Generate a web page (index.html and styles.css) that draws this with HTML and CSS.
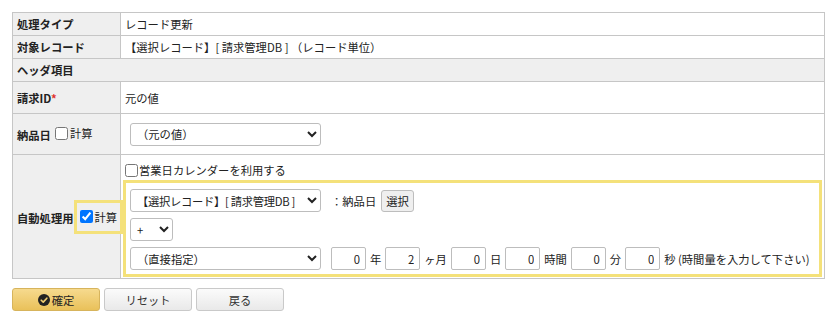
FILE: index.html
```html
<!DOCTYPE html>
<html lang="ja">
<head>
<meta charset="utf-8">
<link rel="stylesheet" href="styles.css">
</head>
<body>
<table class="form">
  <colgroup><col class="c-label"><col></colgroup>
  <tr class="r-std"><th>処理タイプ</th><td>レコード更新</td></tr>
  <tr class="r-std"><th>対象レコード</th><td>【選択レコード】[&nbsp;請求管理DB&nbsp;]&nbsp;（レコード単位）</td></tr>
  <tr class="r-std"><th colspan="2" class="section">ヘッダ項目</th></tr>
  <tr class="r-id"><th>請求ID<span class="req">*</span></th><td>元の値</td></tr>
  <tr class="r-date">
    <th><span class="lbl">納品日</span><label class="chk"><input type="checkbox">計算</label></th>
    <td class="pad-sel"><select class="sel-wide"><option>（元の値）</option></select></td>
  </tr>
  <tr class="r-auto">
    <th><span class="lbl">自動処理用</span><label class="chk hl"><input type="checkbox" checked>計算</label></th>
    <td class="auto-cell">
      <label class="chk cal"><input type="checkbox">営業日カレンダーを利用する</label>
      <div class="calc-box">
        <div class="line">
          <select class="sel-wide sel-rec"><option>【選択レコード】[ 請求管理DB ]</option></select>
          <span class="field-name">：納品日</span>
          <button class="btn-small" type="button">選択</button>
        </div>
        <div class="line">
          <select class="sel-op"><option>+</option></select>
        </div>
        <div class="line">
          <select class="sel-wide sel-gap"><option>（直接指定）</option></select>
          <input class="num" type="text" value="0"><span>年</span>
          <input class="num" type="text" value="2"><span>ヶ月</span>
          <input class="num" type="text" value="0"><span>日</span>
          <input class="num" type="text" value="0"><span>時間</span>
          <input class="num" type="text" value="0"><span>分</span>
          <input class="num" type="text" value="0"><span>秒 (時間量を入力して下さい)</span>
        </div>
      </div>
    </td>
  </tr>
</table>
<div class="actions">
  <button class="btn btn-primary" type="button"><svg class="ico" viewBox="0 0 16 16" width="12" height="12"><circle cx="8" cy="8" r="8" fill="#222"/><path d="M4.3 8.3 L7 10.9 L11.8 5.6" fill="none" stroke="#f0cd70" stroke-width="2.2" stroke-linecap="round" stroke-linejoin="round"/></svg>確定</button>
  <button class="btn" type="button">リセット</button>
  <button class="btn" type="button">戻る</button>
</div>
</body>
</html>
```

FILE: styles.css
```css
html, body {
  margin: 0;
  background: #fff;
}
body {
  padding: 12px;
  font-family: "Noto Sans CJK JP", "Noto Sans", sans-serif;
  font-size: 11.3px;
  color: #222;
}
.form {
  border-collapse: collapse;
  table-layout: fixed;
  width: 813px;
}
.c-label { width: 108px; }
.form th, .form td {
  border: 1px solid #c6c6c6;
  padding: 0 4px;
  text-align: left;
  vertical-align: middle;
  line-height: 16px;
}
.form th {
  background: #efefef;
  font-weight: bold;
  white-space: nowrap;
}
.form td { background: #fff; }
.form th.section { background: #efefef; }
.r-std th, .r-std td { height: 22px; }
.r-id th, .r-id td { height: 31px; }
.r-date th, .r-date td { height: 40px; }
.req { color: #e0342c; font-weight: bold; }
.lbl { margin-right: 2px; }
.chk {
  display: inline-flex;
  align-items: center;
  font-weight: normal;
  white-space: nowrap;
}
.chk input {
  width: 13px;
  height: 13px;
  margin: 0 2px 0 2px;
}
.hl {
  border: 3px solid #f4e17a;
  padding: 6px 3px 6px 1px;
  margin-left: -2px;
  margin-right: -4px;
}
.pad-sel { padding-left: 9px !important; }
select {
  font-family: inherit;
  font-size: 11.3px;
  color: #222;
  height: 23px;
  border: 1px solid #bdbdbd;
  border-radius: 3px;
  background: #fff;
  padding: 0 0 0 2px;
  flex-shrink: 0;
}
.sel-wide { width: 191px; }
.sel-rec { letter-spacing: -0.3px; }
.sel-op { width: 43px; }
.sel-gap { margin-right: 6px; }
.auto-cell {
  padding: 7px 2px 1px 2px !important;
}
.cal { margin-bottom: 2px; }
.cal input { margin-left: 2px; margin-right: 1px; }
.calc-box {
  border: 3px solid #f4e17a;
  padding: 6px 4px 4px 4px;
  display: flex;
  flex-direction: column;
  gap: 6px;
}
.line {
  display: flex;
  align-items: center;
  gap: 4px;
  white-space: nowrap;
}
.line > * { flex-shrink: 0; }
.field-name { margin-left: 6px; margin-right: 1px; }
.btn-small {
  font-family: inherit;
  font-size: 11.3px;
  height: 22px;
  padding: 0 4px;
  border: 1px solid #bdbdbd;
  border-radius: 3px;
  background: #efefef;
  color: #222;
}
.num {
  box-sizing: border-box;
  width: 35px;
  height: 23px;
  font-family: inherit;
  font-size: 11.3px;
  text-align: right;
  padding: 0 5px;
  border: 1px solid #bdbdbd;
  border-radius: 2px;
  color: #222;
  margin: 0;
}
.actions {
  margin-top: 9px;
  display: flex;
  gap: 4px;
}
.btn {
  box-sizing: border-box;
  width: 88px;
  height: 23px;
  font-family: inherit;
  font-size: 11.3px;
  color: #333;
  border: 1px solid #c9c9c9;
  border-radius: 3px;
  background: linear-gradient(#fbfbfb, #e9e9e9);
  display: inline-flex;
  align-items: center;
  justify-content: center;
  gap: 2px;
  padding: 0;
}
.btn-primary {
  background: linear-gradient(#f6da8e, #e9c15a);
  border-color: #d7b45c;
  color: #222;
}
.ico { display: block; }
```
